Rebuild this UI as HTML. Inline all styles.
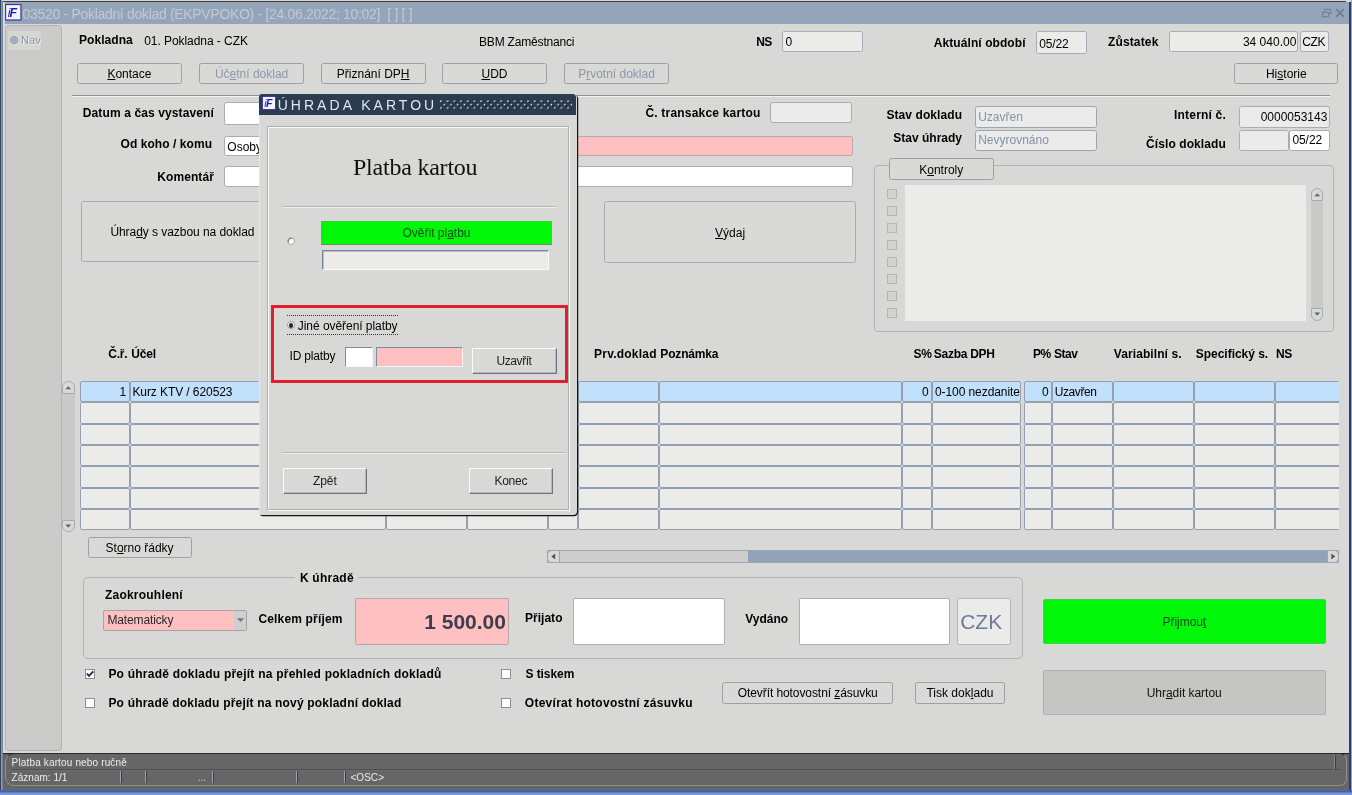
<!DOCTYPE html>
<html lang="cs"><head><meta charset="utf-8"><title>03520 - Pokladní doklad (EKPVPOKO)</title>
<style>
html,body{margin:0;padding:0;}
body{width:1352px;height:795px;overflow:hidden;position:relative;background:#d8d8d6;font-family:"Liberation Sans",sans-serif;}
#root{position:absolute;left:0;top:0;width:1352px;height:795px;overflow:hidden;will-change:transform;}
.a{position:absolute;box-sizing:content-box;}
.f{box-sizing:border-box;}
.t{position:absolute;white-space:pre;}
.cc{position:absolute;left:0;top:0;transform:translateX(-50%);white-space:pre;}
.ic svg{display:block}
u{text-decoration:underline;text-underline-offset:0.6px;text-decoration-thickness:0.9px;}
svg{display:block}
</style></head><body><div id="root">
<div class="a " style="left:0px;top:0px;width:1352px;height:795px;background:#d8d8d6"></div>
<div class="a " style="left:0px;top:0px;width:1352px;height:1px;background:#d4d6d8"></div>
<div class="a " style="left:3px;top:1px;width:1343px;height:1.4px;background:#3a3c40"></div>
<div class="a " style="left:4px;top:2.4px;width:1345px;height:21.4px;background:#95a5b9"></div>
<div class="a " style="left:0px;top:0px;width:0.9px;height:795px;background:#34465e"></div>
<div class="a " style="left:0.9px;top:0px;width:1.2px;height:795px;background:#8a9ab4"></div>
<div class="a " style="left:2.1px;top:1px;width:0.9px;height:790px;background:#74839b"></div>
<div class="a " style="left:3px;top:2px;width:1.8px;height:750.6px;background:#d4dbe2"></div>
<div class="a " style="left:1349px;top:2px;width:1.6px;height:790px;background:#2b3f68"></div>
<div class="a " style="left:1350.6px;top:0px;width:1.4px;height:795px;background:#8fa2c8"></div>
<div class="a ic" style="left:5px;top:4px;width:16.5px;height:16.5px;"><svg viewBox="0 0 16 16" width="16.5" height="16.5"><rect x="0.5" y="0.5" width="15" height="15" fill="#f4f4ff" stroke="#3a3a9c" stroke-width="1.2"/><text x="2.6" y="12.4" font-family="Liberation Sans, sans-serif" font-style="italic" font-size="12" fill="#1c1ca8"><tspan font-weight="normal">i</tspan><tspan font-weight="bold" dx="-0.8">F</tspan></text></svg></div>
<div class="t" style="left:22.6px;top:5.00px;font:normal 14px/18px 'Liberation Sans',sans-serif;color:#c0c9d5;letter-spacing:-0.314px;white-space:pre;">03520 - Pokladní doklad (EKPVPOKO) - [24.06.2022; 10:02]  [ ] [ ]</div>
<svg class="a" style="left:1320px;top:6px" width="28" height="14" viewBox="0 0 28 14"><g fill="none" stroke="#76839a" stroke-width="1.2"><rect x="4.6" y="3.4" width="6" height="4.2"/><path d="M2.6 10.6h6v-4.2h-6z" fill="#95a5b9"/><path d="M16.4 3.2l7.4 7.4M23.8 3.2l-7.4 7.4" stroke-width="1.7" stroke="#6f7c92"/></g></svg>
<div class="a f" style="left:5px;top:24.8px;width:57px;height:726.4px;background:#cbcbc9;border:1px solid #b0b4b3;border-radius:3px;box-shadow:0 0 0 0.8px #d6dadb;"></div>
<div class="a " style="left:8.4px;top:31px;width:32.6px;height:18.8px;background:#d6d6d3"></div>
<div class="a" style="left:9.6px;top:35.8px;width:8.2px;height:8.2px;border-radius:50%;background:#9eaaba;border:1.2px solid #8791a2;box-sizing:border-box;box-shadow:inset 0 0 0 0.7px #c4ccd6"></div>
<div class="t" style="left:21.1px;top:33.00px;font:normal 11px/14px 'Liberation Sans',sans-serif;color:#8c97a8;text-shadow:0.8px 0.8px 0 #eef0f2;">Nav</div>
<div class="t" style="left:79px;top:32.00px;font:bold 12px/16px 'Liberation Sans',sans-serif;color:#000;letter-spacing:0.050px;">Pokladna</div>
<div class="t" style="left:144.2px;top:33.00px;font:normal 12px/16px 'Liberation Sans',sans-serif;color:#000;letter-spacing:-0.054px;">01. Pokladna - CZK</div>
<div class="t" style="left:479px;top:34.00px;font:normal 12px/16px 'Liberation Sans',sans-serif;color:#000;letter-spacing:-0.181px;">BBM Zaměstnanci</div>
<div class="t" style="left:756.14px;top:34.00px;font:bold 12px/16px 'Liberation Sans',sans-serif;color:#000;letter-spacing:-0.450px;">NS</div>
<div class="a f" style="left:782.2px;top:31px;width:81.2px;height:20.6px;background:#ebebe9;border:1px solid #a6adb7;border-radius:2.5px;"></div>
<div class="t" style="left:785.4px;top:34.00px;font:normal 12px/16px 'Liberation Sans',sans-serif;color:#000;">0</div>
<div class="t" style="left:933.8px;top:35.00px;font:bold 12px/16px 'Liberation Sans',sans-serif;color:#000;letter-spacing:0.075px;">Aktuální období</div>
<div class="a f" style="left:1036.2px;top:31px;width:50.4px;height:23.4px;background:#ebebe9;border:1px solid #a6adb7;border-radius:2.5px;"></div>
<div class="t" style="left:1039.2px;top:36.00px;font:normal 12px/16px 'Liberation Sans',sans-serif;color:#000;letter-spacing:-0.157px;">05/22</div>
<div class="t" style="left:1108px;top:34.00px;font:bold 12px/16px 'Liberation Sans',sans-serif;color:#000;letter-spacing:0.136px;">Zůstatek</div>
<div class="a f" style="left:1168.8px;top:31px;width:129.4px;height:20.6px;background:#ebebe9;border:1px solid #a6adb7;border-radius:2.5px;"></div>
<div class="t" style="right:55.7px;text-align:right;top:34.00px;font:normal 12px/16px 'Liberation Sans',sans-serif;color:#000;">34 040.00</div>
<div class="a f" style="left:1300.4px;top:31px;width:29px;height:20.6px;background:#ebebe9;border:1px solid #a6adb7;border-radius:2.5px;"></div>
<div class="t" style="left:1302.3px;top:34.00px;font:normal 12px/16px 'Liberation Sans',sans-serif;color:#000;letter-spacing:-0.450px;">CZK</div>
<div class="a f" style="left:77.3px;top:63.1px;width:104.3px;height:21.4px;background:#d9d9d7;border:1px solid #9da1a6;border-radius:2.5px;"></div>
<div class="t" style="left:129.45px;width:0;top:66.00px;font:normal 12px/16px 'Liberation Sans',sans-serif;color:#000;"><span class="cc"><u>K</u>ontace</span></div>
<div class="a f" style="left:199.4px;top:63.1px;width:104.4px;height:21.4px;background:#d9d9d7;border:1px solid #9da1a6;border-radius:2.5px;"></div>
<div class="t" style="left:251.6px;width:0;top:66.00px;font:normal 12px/16px 'Liberation Sans',sans-serif;color:#8c98aa;"><span class="cc">Úč<u>e</u>tní doklad</span></div>
<div class="a f" style="left:320.7px;top:63.1px;width:105px;height:21.4px;background:#d9d9d7;border:1px solid #9da1a6;border-radius:2.5px;"></div>
<div class="t" style="left:373.2px;width:0;top:66.00px;font:normal 12px/16px 'Liberation Sans',sans-serif;color:#000;"><span class="cc">Přiznání DP<u>H</u></span></div>
<div class="a f" style="left:442px;top:63.1px;width:105px;height:21.4px;background:#d9d9d7;border:1px solid #9da1a6;border-radius:2.5px;"></div>
<div class="t" style="left:494.5px;width:0;top:66.00px;font:normal 12px/16px 'Liberation Sans',sans-serif;color:#000;"><span class="cc"><u>U</u>DD</span></div>
<div class="a f" style="left:564px;top:63.1px;width:105px;height:21.4px;background:#d9d9d7;border:1px solid #9da1a6;border-radius:2.5px;"></div>
<div class="t" style="left:616.5px;width:0;top:66.00px;font:normal 12px/16px 'Liberation Sans',sans-serif;color:#8c98aa;"><span class="cc">P<u>r</u>votní doklad</span></div>
<div class="a f" style="left:1234.1px;top:63.1px;width:104.4px;height:21.4px;background:#d9d9d7;border:1px solid #9da1a6;border-radius:2.5px;"></div>
<div class="t" style="left:1286.3px;width:0;top:66.00px;font:normal 12px/16px 'Liberation Sans',sans-serif;color:#000;"><span class="cc">Hi<u>s</u>torie</span></div>
<div class="a " style="left:72px;top:95px;width:1258px;height:1px;background:#8f9092"></div>
<div class="a " style="left:72px;top:96px;width:1258px;height:1px;background:#f3f3f3"></div>
<div class="t" style="left:82.8px;top:105.00px;font:bold 12px/16px 'Liberation Sans',sans-serif;color:#000;letter-spacing:0.113px;">Datum a čas vystavení</div>
<div class="t" style="left:120.5px;top:136.00px;font:bold 12px/16px 'Liberation Sans',sans-serif;color:#000;letter-spacing:0.064px;">Od koho / komu</div>
<div class="t" style="left:157.3px;top:169.00px;font:bold 12px/16px 'Liberation Sans',sans-serif;color:#000;letter-spacing:0.070px;">Komentář</div>
<div class="a f" style="left:224.4px;top:102.4px;width:175.6px;height:23px;background:#fff;border:1px solid #a6adb7;border-radius:2.5px;"></div>
<div class="a f" style="left:224.4px;top:135.6px;width:628.5px;height:20.8px;background:#fff;border:1px solid #a6adb7;border-radius:2.5px;"></div>
<div class="a " style="left:560px;top:136.6px;width:292px;height:18.8px;background:#fec0c0"></div>
<div class="a f" style="left:224.4px;top:166.2px;width:628.5px;height:20.6px;background:#fff;border:1px solid #a6adb7;border-radius:2.5px;"></div>
<div class="t" style="left:227.3px;top:139.00px;font:normal 12px/16px 'Liberation Sans',sans-serif;color:#000;">Osoby</div>
<div class="t" style="left:645.4px;top:105.00px;font:bold 12px/16px 'Liberation Sans',sans-serif;color:#000;letter-spacing:0.201px;">Č. transakce kartou</div>
<div class="a f" style="left:770.4px;top:101.8px;width:81.4px;height:21px;background:#ebebe9;border:1px solid #a6adb7;border-radius:2.5px;"></div>
<div class="a f" style="left:560px;top:135.6px;width:292.9px;height:20.8px;background:#fec0c0;border:1px solid #b9a9ab;border-radius:2.5px;"></div>
<div class="t" style="left:886.4px;top:107.00px;font:bold 12px/16px 'Liberation Sans',sans-serif;color:#000;letter-spacing:0.083px;">Stav dokladu</div>
<div class="t" style="left:893.3px;top:130.00px;font:bold 12px/16px 'Liberation Sans',sans-serif;color:#000;letter-spacing:0.001px;">Stav úhrady</div>
<div class="a f" style="left:975px;top:106.2px;width:121.7px;height:21.4px;background:#ebebe9;border:1px solid #9aa4b2;border-radius:2.5px;"></div>
<div class="a f" style="left:975px;top:129.8px;width:121.7px;height:21.4px;background:#ebebe9;border:1px solid #9aa4b2;border-radius:2.5px;"></div>
<div class="t" style="left:978.2px;top:109.00px;font:normal 12px/16px 'Liberation Sans',sans-serif;color:#8391a8;">Uzavřen</div>
<div class="t" style="left:978.2px;top:132.00px;font:normal 12px/16px 'Liberation Sans',sans-serif;color:#8391a8;">Nevyrovnáno</div>
<div class="t" style="left:1174px;top:107.00px;font:bold 12px/16px 'Liberation Sans',sans-serif;color:#000;letter-spacing:0.199px;">Interní č.</div>
<div class="t" style="left:1146px;top:136.00px;font:bold 12px/16px 'Liberation Sans',sans-serif;color:#000;letter-spacing:0.094px;">Číslo dokladu</div>
<div class="a f" style="left:1239.2px;top:106.4px;width:90.4px;height:21.2px;background:#ebebe9;border:1px solid #a6adb7;border-radius:2.5px;"></div>
<div class="t" style="right:24.6px;text-align:right;top:109.00px;font:normal 12px/16px 'Liberation Sans',sans-serif;color:#000;">0000053143</div>
<div class="a f" style="left:1239.2px;top:130px;width:50px;height:21.3px;background:#ebebe9;border:1px solid #a6adb7;border-radius:2.5px;"></div>
<div class="a f" style="left:1289.2px;top:130px;width:40.4px;height:21.3px;background:#fff;border:1px solid #a6adb7;border-radius:2.5px;"></div>
<div class="t" style="left:1292.4px;top:132.00px;font:normal 12px/16px 'Liberation Sans',sans-serif;color:#000;letter-spacing:-0.057px;">05/22</div>
<div class="a f" style="left:873.5px;top:165.4px;width:460.5px;height:166.4px;border:1px solid #b0b4b8;border-radius:4px;"></div>
<div class="a f" style="left:889px;top:158.4px;width:104.5px;height:21.6px;background:#d9d9d7;border:1px solid #9da1a6;border-radius:2.5px;"></div>
<div class="t" style="left:941.25px;width:0;top:162.00px;font:normal 12px/16px 'Liberation Sans',sans-serif;color:#000;"><span class="cc">K<u>o</u>ntroly</span></div>
<div class="a f" style="left:887.2px;top:189px;width:10px;height:10px;background:#d2d2d0;border:1px solid #b3b5b7;"></div>
<div class="a f" style="left:887.2px;top:206.05px;width:10px;height:10px;background:#d2d2d0;border:1px solid #b3b5b7;"></div>
<div class="a f" style="left:887.2px;top:223.1px;width:10px;height:10px;background:#d2d2d0;border:1px solid #b3b5b7;"></div>
<div class="a f" style="left:887.2px;top:240.15px;width:10px;height:10px;background:#d2d2d0;border:1px solid #b3b5b7;"></div>
<div class="a f" style="left:887.2px;top:257.2px;width:10px;height:10px;background:#d2d2d0;border:1px solid #b3b5b7;"></div>
<div class="a f" style="left:887.2px;top:274.25px;width:10px;height:10px;background:#d2d2d0;border:1px solid #b3b5b7;"></div>
<div class="a f" style="left:887.2px;top:291.3px;width:10px;height:10px;background:#d2d2d0;border:1px solid #b3b5b7;"></div>
<div class="a f" style="left:887.2px;top:308.35px;width:10px;height:10px;background:#d2d2d0;border:1px solid #b3b5b7;"></div>
<div class="a " style="left:905px;top:185px;width:401.4px;height:136.3px;background:#ebebe9"></div>
<div class="a " style="left:1310.7px;top:194.2px;width:12.4px;height:120.8px;background:#cacbc9"></div>
<div class="a f" style="left:1310.7px;top:188.2px;width:12.4px;height:12.6px;background:#d9d9d7;border:1px solid #a4abb5;border-radius:6px 6px 1px 1px;overflow:hidden"><svg width="12.4" height="12.6" viewBox="0.9 0.6 12 12"><path d="M3.2 7.6L6 4.6l2.8 3z" fill="#5d6470"/></svg></div>
<div class="a f" style="left:1310.7px;top:308.4px;width:12.4px;height:12.6px;background:#d9d9d7;border:1px solid #a4abb5;border-radius:1px 1px 6px 6px;overflow:hidden"><svg width="12.4" height="12.6" viewBox="0.9 1.2 12 12"><path d="M3.2 4.6L6 7.6l2.8-3z" fill="#5d6470"/></svg></div>
<div class="a f" style="left:81.2px;top:200.8px;width:202.8px;height:61.5px;background:#d9d9d7;border:1px solid #a4acb6;border-radius:2.5px;"></div>
<div class="t" style="left:110.4px;top:224.00px;font:normal 12px/16px 'Liberation Sans',sans-serif;color:#000;letter-spacing:-0.055px;">Úhra<u>d</u>y s vazbou na doklad</div>
<div class="a f" style="left:604.3px;top:200.8px;width:251.6px;height:61.8px;background:#d9d9d7;border:1px solid #a4acb6;border-radius:2.5px;"></div>
<div class="t" style="left:730.1px;width:0;top:225.00px;font:normal 12px/16px 'Liberation Sans',sans-serif;color:#000;"><span class="cc"><u>V</u>ýdaj</span></div>
<div class="t" style="left:108.2px;top:346.00px;font:bold 12px/16px 'Liberation Sans',sans-serif;color:#000;letter-spacing:-0.168px;">Č.ř.</div>
<div class="t" style="left:131.2px;top:346.00px;font:bold 12px/16px 'Liberation Sans',sans-serif;color:#000;letter-spacing:-0.116px;">Účel</div>
<div class="t" style="left:594px;top:346.00px;font:bold 12px/16px 'Liberation Sans',sans-serif;color:#000;letter-spacing:0.226px;">Prv.doklad</div>
<div class="t" style="left:660.3px;top:346.00px;font:bold 12px/16px 'Liberation Sans',sans-serif;color:#000;letter-spacing:-0.165px;">Poznámka</div>
<div class="t" style="left:913.588px;top:346.00px;font:bold 12px/16px 'Liberation Sans',sans-serif;color:#000;letter-spacing:-0.450px;">S%</div>
<div class="t" style="left:933.8px;top:346.00px;font:bold 12px/16px 'Liberation Sans',sans-serif;color:#000;letter-spacing:-0.269px;">Sazba DPH</div>
<div class="t" style="left:1032.99px;top:346.00px;font:bold 12px/16px 'Liberation Sans',sans-serif;color:#000;letter-spacing:-0.450px;">P%</div>
<div class="t" style="left:1053.9px;top:346.00px;font:bold 12px/16px 'Liberation Sans',sans-serif;color:#000;letter-spacing:-0.416px;">Stav</div>
<div class="t" style="left:1113.8px;top:346.00px;font:bold 12px/16px 'Liberation Sans',sans-serif;color:#000;letter-spacing:0.084px;">Variabilní s.</div>
<div class="t" style="left:1195.8px;top:346.00px;font:bold 12px/16px 'Liberation Sans',sans-serif;color:#000;letter-spacing:-0.026px;">Specifický s.</div>
<div class="t" style="left:1275.99px;top:346.00px;font:bold 12px/16px 'Liberation Sans',sans-serif;color:#000;letter-spacing:-0.450px;">NS</div>
<div class="a f" style="left:80.2px;top:380.8px;width:49.4px;height:21.37px;background:#c0e0fc;border:1px solid #949fb0;border-radius:2px;"></div>
<div class="a f" style="left:129.6px;top:380.8px;width:256.4px;height:21.37px;background:#c0e0fc;border:1px solid #949fb0;border-radius:2px;"></div>
<div class="a f" style="left:386px;top:380.8px;width:81px;height:21.37px;background:#c0e0fc;border:1px solid #949fb0;border-radius:2px;"></div>
<div class="a f" style="left:467px;top:380.8px;width:80.6px;height:21.37px;background:#c0e0fc;border:1px solid #949fb0;border-radius:2px;"></div>
<div class="a f" style="left:547.6px;top:380.8px;width:30.6px;height:21.37px;background:#c0e0fc;border:1px solid #949fb0;border-radius:2px;"></div>
<div class="a f" style="left:578.2px;top:380.8px;width:80.6px;height:21.37px;background:#c0e0fc;border:1px solid #949fb0;border-radius:2px;"></div>
<div class="a f" style="left:658.8px;top:380.8px;width:243.6px;height:21.37px;background:#c0e0fc;border:1px solid #949fb0;border-radius:2px;"></div>
<div class="a f" style="left:902.4px;top:380.8px;width:29.4px;height:21.37px;background:#c0e0fc;border:1px solid #949fb0;border-radius:2px;"></div>
<div class="a f" style="left:931.8px;top:380.8px;width:89.6px;height:21.37px;background:#c0e0fc;border:1px solid #949fb0;border-radius:2px;"></div>
<div class="a f" style="left:1024.2px;top:380.8px;width:27.8px;height:21.37px;background:#c0e0fc;border:1px solid #949fb0;border-radius:2px;"></div>
<div class="a f" style="left:1052px;top:380.8px;width:60.8px;height:21.37px;background:#c0e0fc;border:1px solid #949fb0;border-radius:2px;"></div>
<div class="a f" style="left:1112.8px;top:380.8px;width:81.3px;height:21.37px;background:#c0e0fc;border:1px solid #949fb0;border-radius:2px;"></div>
<div class="a f" style="left:1194.1px;top:380.8px;width:81.1px;height:21.37px;background:#c0e0fc;border:1px solid #949fb0;border-radius:2px;"></div>
<div class="a f" style="left:1275.2px;top:380.8px;width:64px;height:21.37px;background:#c0e0fc;border:1px solid #949fb0;border-right:none;border-radius:2px 0 0 2px;"></div>
<div class="a f" style="left:80.2px;top:402.17px;width:49.4px;height:21.37px;background:#ebebe9;border:1px solid #949fb0;border-radius:2px;"></div>
<div class="a f" style="left:129.6px;top:402.17px;width:256.4px;height:21.37px;background:#ebebe9;border:1px solid #949fb0;border-radius:2px;"></div>
<div class="a f" style="left:386px;top:402.17px;width:81px;height:21.37px;background:#ebebe9;border:1px solid #949fb0;border-radius:2px;"></div>
<div class="a f" style="left:467px;top:402.17px;width:80.6px;height:21.37px;background:#ebebe9;border:1px solid #949fb0;border-radius:2px;"></div>
<div class="a f" style="left:547.6px;top:402.17px;width:30.6px;height:21.37px;background:#ebebe9;border:1px solid #949fb0;border-radius:2px;"></div>
<div class="a f" style="left:578.2px;top:402.17px;width:80.6px;height:21.37px;background:#ebebe9;border:1px solid #949fb0;border-radius:2px;"></div>
<div class="a f" style="left:658.8px;top:402.17px;width:243.6px;height:21.37px;background:#ebebe9;border:1px solid #949fb0;border-radius:2px;"></div>
<div class="a f" style="left:902.4px;top:402.17px;width:29.4px;height:21.37px;background:#ebebe9;border:1px solid #949fb0;border-radius:2px;"></div>
<div class="a f" style="left:931.8px;top:402.17px;width:89.6px;height:21.37px;background:#ebebe9;border:1px solid #949fb0;border-radius:2px;"></div>
<div class="a f" style="left:1024.2px;top:402.17px;width:27.8px;height:21.37px;background:#ebebe9;border:1px solid #949fb0;border-radius:2px;"></div>
<div class="a f" style="left:1052px;top:402.17px;width:60.8px;height:21.37px;background:#ebebe9;border:1px solid #949fb0;border-radius:2px;"></div>
<div class="a f" style="left:1112.8px;top:402.17px;width:81.3px;height:21.37px;background:#ebebe9;border:1px solid #949fb0;border-radius:2px;"></div>
<div class="a f" style="left:1194.1px;top:402.17px;width:81.1px;height:21.37px;background:#ebebe9;border:1px solid #949fb0;border-radius:2px;"></div>
<div class="a f" style="left:1275.2px;top:402.17px;width:64px;height:21.37px;background:#ebebe9;border:1px solid #949fb0;border-right:none;border-radius:2px 0 0 2px;"></div>
<div class="a f" style="left:80.2px;top:423.54px;width:49.4px;height:21.37px;background:#ebebe9;border:1px solid #949fb0;border-radius:2px;"></div>
<div class="a f" style="left:129.6px;top:423.54px;width:256.4px;height:21.37px;background:#ebebe9;border:1px solid #949fb0;border-radius:2px;"></div>
<div class="a f" style="left:386px;top:423.54px;width:81px;height:21.37px;background:#ebebe9;border:1px solid #949fb0;border-radius:2px;"></div>
<div class="a f" style="left:467px;top:423.54px;width:80.6px;height:21.37px;background:#ebebe9;border:1px solid #949fb0;border-radius:2px;"></div>
<div class="a f" style="left:547.6px;top:423.54px;width:30.6px;height:21.37px;background:#ebebe9;border:1px solid #949fb0;border-radius:2px;"></div>
<div class="a f" style="left:578.2px;top:423.54px;width:80.6px;height:21.37px;background:#ebebe9;border:1px solid #949fb0;border-radius:2px;"></div>
<div class="a f" style="left:658.8px;top:423.54px;width:243.6px;height:21.37px;background:#ebebe9;border:1px solid #949fb0;border-radius:2px;"></div>
<div class="a f" style="left:902.4px;top:423.54px;width:29.4px;height:21.37px;background:#ebebe9;border:1px solid #949fb0;border-radius:2px;"></div>
<div class="a f" style="left:931.8px;top:423.54px;width:89.6px;height:21.37px;background:#ebebe9;border:1px solid #949fb0;border-radius:2px;"></div>
<div class="a f" style="left:1024.2px;top:423.54px;width:27.8px;height:21.37px;background:#ebebe9;border:1px solid #949fb0;border-radius:2px;"></div>
<div class="a f" style="left:1052px;top:423.54px;width:60.8px;height:21.37px;background:#ebebe9;border:1px solid #949fb0;border-radius:2px;"></div>
<div class="a f" style="left:1112.8px;top:423.54px;width:81.3px;height:21.37px;background:#ebebe9;border:1px solid #949fb0;border-radius:2px;"></div>
<div class="a f" style="left:1194.1px;top:423.54px;width:81.1px;height:21.37px;background:#ebebe9;border:1px solid #949fb0;border-radius:2px;"></div>
<div class="a f" style="left:1275.2px;top:423.54px;width:64px;height:21.37px;background:#ebebe9;border:1px solid #949fb0;border-right:none;border-radius:2px 0 0 2px;"></div>
<div class="a f" style="left:80.2px;top:444.91px;width:49.4px;height:21.37px;background:#ebebe9;border:1px solid #949fb0;border-radius:2px;"></div>
<div class="a f" style="left:129.6px;top:444.91px;width:256.4px;height:21.37px;background:#ebebe9;border:1px solid #949fb0;border-radius:2px;"></div>
<div class="a f" style="left:386px;top:444.91px;width:81px;height:21.37px;background:#ebebe9;border:1px solid #949fb0;border-radius:2px;"></div>
<div class="a f" style="left:467px;top:444.91px;width:80.6px;height:21.37px;background:#ebebe9;border:1px solid #949fb0;border-radius:2px;"></div>
<div class="a f" style="left:547.6px;top:444.91px;width:30.6px;height:21.37px;background:#ebebe9;border:1px solid #949fb0;border-radius:2px;"></div>
<div class="a f" style="left:578.2px;top:444.91px;width:80.6px;height:21.37px;background:#ebebe9;border:1px solid #949fb0;border-radius:2px;"></div>
<div class="a f" style="left:658.8px;top:444.91px;width:243.6px;height:21.37px;background:#ebebe9;border:1px solid #949fb0;border-radius:2px;"></div>
<div class="a f" style="left:902.4px;top:444.91px;width:29.4px;height:21.37px;background:#ebebe9;border:1px solid #949fb0;border-radius:2px;"></div>
<div class="a f" style="left:931.8px;top:444.91px;width:89.6px;height:21.37px;background:#ebebe9;border:1px solid #949fb0;border-radius:2px;"></div>
<div class="a f" style="left:1024.2px;top:444.91px;width:27.8px;height:21.37px;background:#ebebe9;border:1px solid #949fb0;border-radius:2px;"></div>
<div class="a f" style="left:1052px;top:444.91px;width:60.8px;height:21.37px;background:#ebebe9;border:1px solid #949fb0;border-radius:2px;"></div>
<div class="a f" style="left:1112.8px;top:444.91px;width:81.3px;height:21.37px;background:#ebebe9;border:1px solid #949fb0;border-radius:2px;"></div>
<div class="a f" style="left:1194.1px;top:444.91px;width:81.1px;height:21.37px;background:#ebebe9;border:1px solid #949fb0;border-radius:2px;"></div>
<div class="a f" style="left:1275.2px;top:444.91px;width:64px;height:21.37px;background:#ebebe9;border:1px solid #949fb0;border-right:none;border-radius:2px 0 0 2px;"></div>
<div class="a f" style="left:80.2px;top:466.28px;width:49.4px;height:21.37px;background:#ebebe9;border:1px solid #949fb0;border-radius:2px;"></div>
<div class="a f" style="left:129.6px;top:466.28px;width:256.4px;height:21.37px;background:#ebebe9;border:1px solid #949fb0;border-radius:2px;"></div>
<div class="a f" style="left:386px;top:466.28px;width:81px;height:21.37px;background:#ebebe9;border:1px solid #949fb0;border-radius:2px;"></div>
<div class="a f" style="left:467px;top:466.28px;width:80.6px;height:21.37px;background:#ebebe9;border:1px solid #949fb0;border-radius:2px;"></div>
<div class="a f" style="left:547.6px;top:466.28px;width:30.6px;height:21.37px;background:#ebebe9;border:1px solid #949fb0;border-radius:2px;"></div>
<div class="a f" style="left:578.2px;top:466.28px;width:80.6px;height:21.37px;background:#ebebe9;border:1px solid #949fb0;border-radius:2px;"></div>
<div class="a f" style="left:658.8px;top:466.28px;width:243.6px;height:21.37px;background:#ebebe9;border:1px solid #949fb0;border-radius:2px;"></div>
<div class="a f" style="left:902.4px;top:466.28px;width:29.4px;height:21.37px;background:#ebebe9;border:1px solid #949fb0;border-radius:2px;"></div>
<div class="a f" style="left:931.8px;top:466.28px;width:89.6px;height:21.37px;background:#ebebe9;border:1px solid #949fb0;border-radius:2px;"></div>
<div class="a f" style="left:1024.2px;top:466.28px;width:27.8px;height:21.37px;background:#ebebe9;border:1px solid #949fb0;border-radius:2px;"></div>
<div class="a f" style="left:1052px;top:466.28px;width:60.8px;height:21.37px;background:#ebebe9;border:1px solid #949fb0;border-radius:2px;"></div>
<div class="a f" style="left:1112.8px;top:466.28px;width:81.3px;height:21.37px;background:#ebebe9;border:1px solid #949fb0;border-radius:2px;"></div>
<div class="a f" style="left:1194.1px;top:466.28px;width:81.1px;height:21.37px;background:#ebebe9;border:1px solid #949fb0;border-radius:2px;"></div>
<div class="a f" style="left:1275.2px;top:466.28px;width:64px;height:21.37px;background:#ebebe9;border:1px solid #949fb0;border-right:none;border-radius:2px 0 0 2px;"></div>
<div class="a f" style="left:80.2px;top:487.65px;width:49.4px;height:21.37px;background:#ebebe9;border:1px solid #949fb0;border-radius:2px;"></div>
<div class="a f" style="left:129.6px;top:487.65px;width:256.4px;height:21.37px;background:#ebebe9;border:1px solid #949fb0;border-radius:2px;"></div>
<div class="a f" style="left:386px;top:487.65px;width:81px;height:21.37px;background:#ebebe9;border:1px solid #949fb0;border-radius:2px;"></div>
<div class="a f" style="left:467px;top:487.65px;width:80.6px;height:21.37px;background:#ebebe9;border:1px solid #949fb0;border-radius:2px;"></div>
<div class="a f" style="left:547.6px;top:487.65px;width:30.6px;height:21.37px;background:#ebebe9;border:1px solid #949fb0;border-radius:2px;"></div>
<div class="a f" style="left:578.2px;top:487.65px;width:80.6px;height:21.37px;background:#ebebe9;border:1px solid #949fb0;border-radius:2px;"></div>
<div class="a f" style="left:658.8px;top:487.65px;width:243.6px;height:21.37px;background:#ebebe9;border:1px solid #949fb0;border-radius:2px;"></div>
<div class="a f" style="left:902.4px;top:487.65px;width:29.4px;height:21.37px;background:#ebebe9;border:1px solid #949fb0;border-radius:2px;"></div>
<div class="a f" style="left:931.8px;top:487.65px;width:89.6px;height:21.37px;background:#ebebe9;border:1px solid #949fb0;border-radius:2px;"></div>
<div class="a f" style="left:1024.2px;top:487.65px;width:27.8px;height:21.37px;background:#ebebe9;border:1px solid #949fb0;border-radius:2px;"></div>
<div class="a f" style="left:1052px;top:487.65px;width:60.8px;height:21.37px;background:#ebebe9;border:1px solid #949fb0;border-radius:2px;"></div>
<div class="a f" style="left:1112.8px;top:487.65px;width:81.3px;height:21.37px;background:#ebebe9;border:1px solid #949fb0;border-radius:2px;"></div>
<div class="a f" style="left:1194.1px;top:487.65px;width:81.1px;height:21.37px;background:#ebebe9;border:1px solid #949fb0;border-radius:2px;"></div>
<div class="a f" style="left:1275.2px;top:487.65px;width:64px;height:21.37px;background:#ebebe9;border:1px solid #949fb0;border-right:none;border-radius:2px 0 0 2px;"></div>
<div class="a f" style="left:80.2px;top:509.02px;width:49.4px;height:21.37px;background:#ebebe9;border:1px solid #949fb0;border-radius:2px;"></div>
<div class="a f" style="left:129.6px;top:509.02px;width:256.4px;height:21.37px;background:#ebebe9;border:1px solid #949fb0;border-radius:2px;"></div>
<div class="a f" style="left:386px;top:509.02px;width:81px;height:21.37px;background:#ebebe9;border:1px solid #949fb0;border-radius:2px;"></div>
<div class="a f" style="left:467px;top:509.02px;width:80.6px;height:21.37px;background:#ebebe9;border:1px solid #949fb0;border-radius:2px;"></div>
<div class="a f" style="left:547.6px;top:509.02px;width:30.6px;height:21.37px;background:#ebebe9;border:1px solid #949fb0;border-radius:2px;"></div>
<div class="a f" style="left:578.2px;top:509.02px;width:80.6px;height:21.37px;background:#ebebe9;border:1px solid #949fb0;border-radius:2px;"></div>
<div class="a f" style="left:658.8px;top:509.02px;width:243.6px;height:21.37px;background:#ebebe9;border:1px solid #949fb0;border-radius:2px;"></div>
<div class="a f" style="left:902.4px;top:509.02px;width:29.4px;height:21.37px;background:#ebebe9;border:1px solid #949fb0;border-radius:2px;"></div>
<div class="a f" style="left:931.8px;top:509.02px;width:89.6px;height:21.37px;background:#ebebe9;border:1px solid #949fb0;border-radius:2px;"></div>
<div class="a f" style="left:1024.2px;top:509.02px;width:27.8px;height:21.37px;background:#ebebe9;border:1px solid #949fb0;border-radius:2px;"></div>
<div class="a f" style="left:1052px;top:509.02px;width:60.8px;height:21.37px;background:#ebebe9;border:1px solid #949fb0;border-radius:2px;"></div>
<div class="a f" style="left:1112.8px;top:509.02px;width:81.3px;height:21.37px;background:#ebebe9;border:1px solid #949fb0;border-radius:2px;"></div>
<div class="a f" style="left:1194.1px;top:509.02px;width:81.1px;height:21.37px;background:#ebebe9;border:1px solid #949fb0;border-radius:2px;"></div>
<div class="a f" style="left:1275.2px;top:509.02px;width:64px;height:21.37px;background:#ebebe9;border:1px solid #949fb0;border-right:none;border-radius:2px 0 0 2px;"></div>
<div class="t" style="right:1225.8px;text-align:right;top:384.00px;font:normal 12px/16px 'Liberation Sans',sans-serif;color:#000;">1</div>
<div class="t" style="left:132.4px;top:384.00px;font:normal 12px/16px 'Liberation Sans',sans-serif;color:#000;letter-spacing:-0.081px;">Kurz KTV / 620523</div>
<div class="t" style="right:423.4px;text-align:right;top:384.00px;font:normal 12px/16px 'Liberation Sans',sans-serif;color:#000;">0</div>
<div class="t" style="left:934.9px;top:384.00px;font:normal 12px/16px 'Liberation Sans',sans-serif;color:#000;letter-spacing:-0.069px;">0-100 nezdanite</div>
<div class="t" style="right:303.3px;text-align:right;top:384.00px;font:normal 12px/16px 'Liberation Sans',sans-serif;color:#000;">0</div>
<div class="t" style="left:1054.7px;top:384.00px;font:normal 12px/16px 'Liberation Sans',sans-serif;color:#000;letter-spacing:-0.397px;">Uzavřen</div>
<div class="a " style="left:62.3px;top:387px;width:12.4px;height:139.4px;background:#cacbc9"></div>
<div class="a f" style="left:62.3px;top:381px;width:12.4px;height:12.6px;background:#d9d9d7;border:1px solid #a4abb5;border-radius:6px 6px 1px 1px;overflow:hidden"><svg width="12.4" height="12.6" viewBox="0.9 0.6 12 12"><path d="M3.2 7.6L6 4.6l2.8 3z" fill="#5d6470"/></svg></div>
<div class="a f" style="left:62.3px;top:519.8px;width:12.4px;height:12.6px;background:#d9d9d7;border:1px solid #a4abb5;border-radius:1px 1px 6px 6px;overflow:hidden"><svg width="12.4" height="12.6" viewBox="0.9 1.2 12 12"><path d="M3.2 4.6L6 7.6l2.8-3z" fill="#5d6470"/></svg></div>
<div class="a f" style="left:87.5px;top:537.3px;width:104.2px;height:21.2px;background:#d9d9d7;border:1px solid #9da1a6;border-radius:2.5px;"></div>
<div class="t" style="left:139.6px;width:0;top:540.00px;font:normal 12px/16px 'Liberation Sans',sans-serif;color:#000;"><span class="cc">St<u>o</u>rno řádky</span></div>
<div class="a f" style="left:547px;top:550.4px;width:792px;height:12.4px;background:#cdcdcb;border:1px solid #9ca7b6;"></div>
<div class="a " style="left:747.9px;top:551.2px;width:580px;height:10.8px;background:#93a3b7"></div>
<div class="a f" style="left:547px;top:550.4px;width:12.8px;height:12.4px;background:#d9d9d7;border:1px solid #9ca7b6;border-radius:5px 0 0 5px"><svg width="11" height="11" viewBox="0 0 11 11"><path d="M7.2 2.4v6L3.4 5.4z" fill="#4b5260"/></svg></div>
<div class="a f" style="left:1327px;top:550.4px;width:12px;height:12.4px;background:#d9d9d7;border:1px solid #9ca7b6;border-radius:0 5px 5px 0"><svg width="11" height="11" viewBox="0 0 11 11"><path d="M3.4 2.4v6l3.8-3z" fill="#4b5260"/></svg></div>
<div class="a f" style="left:82.6px;top:577px;width:940.4px;height:81.6px;border:1px solid #b0b4b8;border-radius:5px;"></div>
<div class="a " style="left:295px;top:574px;width:63px;height:8px;background:#d8d8d6"></div>
<div class="t" style="left:299.9px;top:570.00px;font:bold 12px/16px 'Liberation Sans',sans-serif;color:#000;letter-spacing:0.242px;">K úhradě</div>
<div class="t" style="left:105px;top:587.00px;font:bold 12px/16px 'Liberation Sans',sans-serif;color:#000;letter-spacing:0.215px;">Zaokrouhlení</div>
<div class="a f" style="left:103px;top:610px;width:143.6px;height:20.6px;background:#fec0c0;border:1px solid #a9a3a9;border-radius:2px;"></div>
<div class="a " style="left:234px;top:611px;width:11.6px;height:18.6px;background:#cfcfcd"></div>
<svg class="a" style="left:235.6px;top:617.4px" width="9" height="6" viewBox="0 0 9 6"><path d="M1 1.2h7L4.5 5z" fill="#6b7a8c"/></svg>
<div class="t" style="left:107.4px;top:612.00px;font:normal 12px/16px 'Liberation Sans',sans-serif;color:#2a2a2a;letter-spacing:-0.125px;">Matematicky</div>
<div class="t" style="left:258.4px;top:611.00px;font:bold 12px/16px 'Liberation Sans',sans-serif;color:#000;letter-spacing:0.172px;">Celkem příjem</div>
<div class="a f" style="left:355.4px;top:598.4px;width:153.2px;height:46.5px;background:#fec0c0;border:1px solid #b4a6a8;border-radius:2px;"></div>
<div class="t" style="left:424.3px;top:609.00px;font:bold 21px/25px 'Liberation Sans',sans-serif;color:#3d3d4d;letter-spacing:-0.021px;">1 500.00</div>
<div class="t" style="left:524.9px;top:610.00px;font:bold 12px/16px 'Liberation Sans',sans-serif;color:#000;letter-spacing:0.043px;">Přijato</div>
<div class="a f" style="left:573.1px;top:598.4px;width:151.5px;height:46.5px;background:#fff;border:1px solid #a9b0b9;border-radius:2px;"></div>
<div class="t" style="left:745.3px;top:611.00px;font:bold 12px/16px 'Liberation Sans',sans-serif;color:#000;letter-spacing:-0.039px;">Vydáno</div>
<div class="a f" style="left:798.6px;top:598.4px;width:151.7px;height:46.2px;background:#fff;border:1px solid #a9b0b9;border-radius:2px;"></div>
<div class="a f" style="left:957.4px;top:598.4px;width:53.6px;height:46.2px;background:#ebebe9;border:1px solid #b4bac2;border-radius:2px;"></div>
<div class="t" style="left:960.2px;top:609.00px;font:normal 21px/25px 'Liberation Sans',sans-serif;color:#6c7c9a;letter-spacing:-0.001px;">CZK</div>
<div class="a f" style="left:1043.4px;top:599.2px;width:282.6px;height:44.8px;background:#00f808;border:1px solid #3fd24a;border-radius:2px;"></div>
<div class="t" style="left:1162.6px;top:614.00px;font:normal 12px/16px 'Liberation Sans',sans-serif;color:#0b4a12;letter-spacing:-0.059px;">Přijmou<u>t</u></div>
<div class="a f" style="left:1043.4px;top:670px;width:282.6px;height:45.4px;background:#c5c5c3;border:1px solid #a9b0b8;border-radius:2px;"></div>
<div class="t" style="left:1146.7px;top:685.00px;font:normal 12px/16px 'Liberation Sans',sans-serif;color:#111;letter-spacing:-0.028px;">Uhr<u>a</u>dit kartou</div>
<div class="a f" style="left:85px;top:669.3px;width:10px;height:9.8px;background:#fff;border:1px solid #8a8e92;"><svg width="8" height="8" viewBox="0 0 8 8" style="position:absolute;left:0;top:0"><path d="M0.9 3.6l2.1 2.3L7.3 1.4" fill="none" stroke="#262e46" stroke-width="1.9"/></svg></div>
<div class="a f" style="left:85px;top:698px;width:10px;height:9.8px;background:#fff;border:1px solid #8a8e92;"></div>
<div class="a f" style="left:501.4px;top:669.3px;width:10px;height:9.8px;background:#fff;border:1px solid #8a8e92;"></div>
<div class="a f" style="left:501.4px;top:698px;width:10px;height:9.8px;background:#fff;border:1px solid #8a8e92;"></div>
<div class="t" style="left:108.4px;top:666.00px;font:bold 12px/16px 'Liberation Sans',sans-serif;color:#000;letter-spacing:0.230px;">Po úhradě dokladu přejít na přehled pokladních dokladů</div>
<div class="t" style="left:108.4px;top:695.00px;font:bold 12px/16px 'Liberation Sans',sans-serif;color:#000;letter-spacing:0.189px;">Po úhradě dokladu přejít na nový pokladní doklad</div>
<div class="t" style="left:525.4px;top:666.00px;font:bold 12px/16px 'Liberation Sans',sans-serif;color:#000;letter-spacing:-0.051px;">S tiskem</div>
<div class="t" style="left:524.8px;top:695.00px;font:bold 12px/16px 'Liberation Sans',sans-serif;color:#000;letter-spacing:0.269px;">Otevírat hotovostní zásuvku</div>
<div class="a f" style="left:722.1px;top:682.4px;width:170.7px;height:21.9px;background:#d9d9d7;border:1px solid #9da1a6;border-radius:2.5px;"></div>
<div class="t" style="left:737.7px;top:685.00px;font:normal 12px/16px 'Liberation Sans',sans-serif;color:#000;letter-spacing:-0.079px;">Otevřít hotovostní <u>z</u>ásuvku</div>
<div class="a f" style="left:915px;top:682.4px;width:89.8px;height:21.9px;background:#d9d9d7;border:1px solid #9da1a6;border-radius:2.5px;"></div>
<div class="t" style="left:926.4px;top:685.00px;font:normal 12px/16px 'Liberation Sans',sans-serif;color:#000;letter-spacing:0.016px;">Tisk dok<u>l</u>adu</div>
<div class="a " style="left:3px;top:752.6px;width:1346.4px;height:1.5px;background:#1c1e22"></div>
<div class="a " style="left:3px;top:754px;width:1346.4px;height:35.6px;background:#666666"></div>
<div class="a f" style="left:5.4px;top:753.2px;width:1341.9px;height:32.8px;border:1px solid #8f8f8f;border-top-color:#2a2c30;border-radius:9px 7px 7px 9px;"></div>
<div class="a " style="left:11px;top:768.9px;width:1330px;height:1px;background:#4c5056"></div>
<div class="a " style="left:11px;top:769.9px;width:1330px;height:0.8px;background:#6c6c6c"></div>
<div class="t" style="left:11.6px;top:756.00px;font:normal 10px/13px 'Liberation Sans',sans-serif;color:#ececec;letter-spacing:0.149px;">Platba kartou nebo ručně</div>
<div class="t" style="left:11.6px;top:771.00px;font:normal 10px/13px 'Liberation Sans',sans-serif;color:#ececec;letter-spacing:0.021px;">Záznam: 1/1</div>
<div class="a " style="left:120.4px;top:770.8px;width:1px;height:12.2px;background:#9aa3b4"></div>
<div class="a " style="left:121.4px;top:770.8px;width:1px;height:12.2px;background:#3e3e3e"></div>
<div class="a " style="left:144.6px;top:770.8px;width:1px;height:12.2px;background:#9aa3b4"></div>
<div class="a " style="left:145.6px;top:770.8px;width:1px;height:12.2px;background:#3e3e3e"></div>
<div class="a " style="left:211.6px;top:770.8px;width:1px;height:12.2px;background:#9aa3b4"></div>
<div class="a " style="left:212.6px;top:770.8px;width:1px;height:12.2px;background:#3e3e3e"></div>
<div class="a " style="left:296.4px;top:770.8px;width:1px;height:12.2px;background:#9aa3b4"></div>
<div class="a " style="left:297.4px;top:770.8px;width:1px;height:12.2px;background:#3e3e3e"></div>
<div class="a " style="left:343.8px;top:770.8px;width:1px;height:12.2px;background:#9aa3b4"></div>
<div class="a " style="left:344.8px;top:770.8px;width:1px;height:12.2px;background:#3e3e3e"></div>
<div class="a " style="left:1333.6px;top:755px;width:1px;height:14px;background:#8a8a8a"></div>
<div class="a " style="left:1335px;top:755px;width:1px;height:14px;background:#3a3a3a"></div>
<div class="t" style="left:197.8px;top:771.00px;font:normal 10px/13px 'Liberation Sans',sans-serif;color:#d0d0d0;">...</div>
<div class="t" style="left:350.4px;top:771.00px;font:normal 10px/13px 'Liberation Sans',sans-serif;color:#ececec;letter-spacing:0.062px;">&lt;OSC&gt;</div>
<div class="a " style="left:0px;top:789.5px;width:1352px;height:5.5px;background:linear-gradient(#4c69ae,#3e5da6 45%,#7d9ad9 55%,#7392d6)"></div>
<div class="a " style="left:258.6px;top:94.2px;width:318.6px;height:420.8px;background:#d8d8d6;border-radius:3px 4px 4px 3px;box-shadow:1px 1px 0 0.2px #141414, inset 1px 0 0 #e6e6e4;"></div>
<div class="a " style="left:258.6px;top:94px;width:317.4px;height:20.7px;background:#2b3b50;border-radius:3px 3.5px 0 0;"></div>
<div class="a ic" style="left:261.6px;top:96.2px;width:14px;height:14px;"><svg viewBox="0 0 16 16" width="14" height="14"><rect x="0.5" y="0.5" width="15" height="15" fill="#f4f4ff" stroke="#3a3a9c" stroke-width="1.2"/><text x="2.6" y="12.4" font-family="Liberation Sans, sans-serif" font-style="italic" font-size="12" fill="#1c1ca8"><tspan font-weight="normal">i</tspan><tspan font-weight="bold" dx="-0.8">F</tspan></text></svg></div>
<div class="t" style="left:277.7px;top:96.00px;font:normal 14px/18px 'Liberation Sans',sans-serif;color:#e2e6ec;letter-spacing:3.035px;">ÚHRADA KARTOU</div>
<svg class="a" style="left:440.4px;top:100px" width="132" height="9.8" viewBox="0 0 132 9.8"><defs><pattern id="bp" width="6.7" height="6.7" patternUnits="userSpaceOnUse"><rect x="0.2" y="0.5" width="1.5" height="1.5" fill="#f4f6fa"/><rect x="1.4" y="1.7" width="1.3" height="1.3" fill="#0a111c"/><rect x="3.55" y="3.85" width="1.5" height="1.5" fill="#f4f6fa"/><rect x="4.75" y="5.05" width="1.3" height="1.3" fill="#0a111c"/></pattern></defs><rect width="132" height="10.6" fill="url(#bp)"/></svg>
<div class="a f" style="left:268.1px;top:126.9px;width:301.5px;height:384.1px;border:1px solid #f7f7f7;"></div>
<div class="a f" style="left:267.1px;top:125.9px;width:301.5px;height:384.1px;border:1px solid #acb0b0;"></div>
<div class="t" style="left:353px;top:153.00px;font:normal 24px/28px 'Liberation Serif',serif;color:#111;letter-spacing:-0.225px;">Platba kartou</div>
<div class="a " style="left:282px;top:205.6px;width:273.6px;height:1px;background:#b4b6b7"></div>
<div class="a " style="left:282px;top:206.6px;width:273.6px;height:1px;background:#efefef"></div>
<div class="a" style="left:287px;top:237px;width:8.4px;height:8.4px;border-radius:50%;background:#fff;border:0.7px solid #a8a8a8;box-sizing:border-box;box-shadow:inset 0.8px 0.8px 0 #666"></div>
<div class="a f" style="left:321.2px;top:221.4px;width:230.6px;height:23.4px;background:#00f808;border:1px solid #35cf40;border-bottom-color:#5a9a5e;"></div>
<div class="t" style="left:436.5px;width:0;top:225.00px;font:normal 12px/16px 'Liberation Sans',sans-serif;color:#0b4a12;"><span class="cc">Ověřit pl<u>a</u>tbu</span></div>
<div class="a f" style="left:322px;top:250.4px;width:227.4px;height:19.6px;background:#ebebe9;border:1px solid #76849e;border-right-color:#fbfbfb;border-bottom-color:#fbfbfb;box-shadow:inset 1px 1px 0 #b9bfca;"></div>
<div class="a f" style="left:271px;top:305px;width:297px;height:78.4px;border:3px solid #df1f2a;"></div>
<div class="a " style="left:287px;top:315.2px;width:111px;height:0px;border-top:1.3px dotted #333"></div>
<div class="a " style="left:287px;top:333.6px;width:111px;height:0px;border-top:1.3px dotted #333"></div>
<div class="a" style="left:286.8px;top:321.2px;width:8.2px;height:8.2px;border-radius:50%;background:#fff;border:0.7px solid #999;box-sizing:border-box;"></div>
<div class="a" style="left:288.5px;top:322.9px;width:4.8px;height:4.8px;border-radius:50%;background:#1c2a3e;"></div>
<div class="t" style="left:297.8px;top:318.00px;font:normal 12px/16px 'Liberation Sans',sans-serif;color:#000;letter-spacing:-0.052px;">Jiné ověření platby</div>
<div class="t" style="left:289.5px;top:348.00px;font:normal 12px/16px 'Liberation Sans',sans-serif;color:#000;letter-spacing:-0.169px;">ID platby</div>
<div class="a f" style="left:344.8px;top:347.3px;width:28.4px;height:20.2px;background:#fff;border:1px solid #7f8ba3;border-right-color:#f6f6f6;border-bottom-color:#f6f6f6;"></div>
<div class="a f" style="left:375.8px;top:347.3px;width:87.6px;height:20.2px;background:#fec0c0;border:1px solid #7f8ba3;border-right-color:#f6f6f6;border-bottom-color:#f6f6f6;"></div>
<div class="a f" style="left:472.4px;top:347.8px;width:84.2px;height:25.8px;background:#d9d9d7;border:1px solid #fafafa;border-right-color:#6d7480;border-bottom-color:#6d7480;box-shadow:inset -1px -1px 0 #b5b8bc;"></div>
<div class="t" style="left:496.6px;top:353.00px;font:normal 12px/16px 'Liberation Sans',sans-serif;color:#1c1c1c;letter-spacing:-0.451px;">Uzavřít</div>
<div class="a " style="left:282px;top:451.8px;width:283.6px;height:1px;background:#b4b6b7"></div>
<div class="a " style="left:282px;top:452.8px;width:283.6px;height:1px;background:#efefef"></div>
<div class="a f" style="left:283.2px;top:468.3px;width:83.8px;height:25.5px;background:#d9d9d7;border:1px solid #fafafa;border-right-color:#6d7480;border-bottom-color:#6d7480;box-shadow:inset -1px -1px 0 #b5b8bc;"></div>
<div class="t" style="left:312.9px;top:473.00px;font:normal 12px/16px 'Liberation Sans',sans-serif;color:#1c1c1c;letter-spacing:-0.037px;">Zpět</div>
<div class="a f" style="left:468.8px;top:468.3px;width:84px;height:25.5px;background:#d9d9d7;border:1px solid #fafafa;border-right-color:#6d7480;border-bottom-color:#6d7480;box-shadow:inset -1px -1px 0 #b5b8bc;"></div>
<div class="t" style="left:494.5px;top:473.00px;font:normal 12px/16px 'Liberation Sans',sans-serif;color:#1c1c1c;letter-spacing:-0.281px;">Konec</div>
</div></body></html>
